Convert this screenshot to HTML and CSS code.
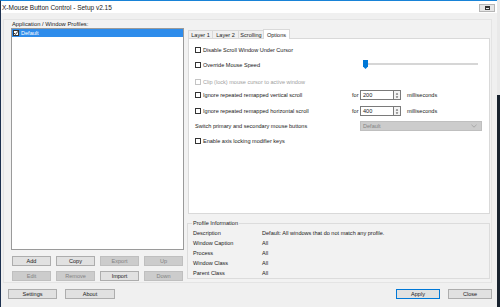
FILE: index.html
```html
<!DOCTYPE html>
<html>
	<head>
		<meta charset="utf-8">
		<title>X-Mouse Button Control - Setup v2.15</title>
		<link rel="stylesheet" href="styles.css">
	</head>
	<body>
		<div class="window">
			<div class="titlebar">
				<span class="title">X-Mouse Button Control - Setup v2.15</span>
				<span class="restore"><i></i></span>
			</div>
			<div class="client">
				<div class="panel">
					<!-- left: profiles -->
					<div class="profiles">
						<div class="caption">Application / Window Profiles:</div>
						<div class="listbox">
							<div class="item selected">
								<span class="check on">
									<svg width="6" height="6" viewBox="0 0 6 6"><path d="M1 3 L2.4 4.5 L5 1.2" fill="none" stroke="#222" stroke-width="0.9"/></svg>
								</span>
								<span>Default</span>
							</div>
						</div>
						<div class="btngrid">
							<span class="btn">Add</span>
							<span class="btn">Copy</span>
							<span class="btn off">Export</span>
							<span class="btn off">Up</span>
							<span class="btn off">Edit</span>
							<span class="btn off">Remove</span>
							<span class="btn">Import</span>
							<span class="btn off">Down</span>
						</div>
					</div>
					<!-- right: tabs + profile info -->
					<div class="settings">
						<div class="tabs">
							<span class="tab t1">Layer 1</span>
							<span class="tab t2">Layer 2</span>
							<span class="tab t3">Scrolling</span>
							<span class="tab t4 active">Options</span>
						</div>
						<div class="tabpage">
							<div class="row r1">
								<label class="cb"><span class="check"></span>Disable Scroll Window Under Cursor</label>
							</div>
							<div class="row r2">
								<label class="cb wslider"><span class="check"></span>Override Mouse Speed</label>
								<div class="slider">
									<div class="track"></div>
									<svg class="thumb" width="5" height="9" viewBox="0 0 5 9"><path d="M0 0 H5 V6.5 L2.5 9 L0 6.5 Z" fill="#0078d7"/></svg>
								</div>
							</div>
							<div class="row r3">
								<label class="cb disabled"><span class="check"></span>Clip (lock) mouse cursor to active window</label>
							</div>
							<div class="row r4">
								<label class="cb wfor"><span class="check"></span>Ignore repeated remapped vertical scroll</label>
								<span class="for">for</span>
								<span class="num">200</span>
								<span class="spin">
									<svg width="7" height="9" viewBox="0 0 7 9"><path d="M2 3.2 L3.5 1.7 L5 3.2 Z M2 5.8 L3.5 7.3 L5 5.8 Z" fill="#444"/></svg>
								</span>
								<span class="ms">milliseconds</span>
							</div>
							<div class="row r5">
								<label class="cb wfor"><span class="check"></span>Ignore repeated remapped horizontal scroll</label>
								<span class="for">for</span>
								<span class="num">400</span>
								<span class="spin">
									<svg width="7" height="9" viewBox="0 0 7 9"><path d="M2 3.2 L3.5 1.7 L5 3.2 Z M2 5.8 L3.5 7.3 L5 5.8 Z" fill="#444"/></svg>
								</span>
								<span class="ms">milliseconds</span>
							</div>
							<div class="row r6">
								<span class="plain">Switch primary and secondary mouse buttons</span>
								<span class="combo">
									<span>Default</span>
									<svg width="6" height="4" viewBox="0 0 6 4"><path d="M0.5 0.8 L3 3.2 L5.5 0.8" fill="none" stroke="#9a9a9a" stroke-width="0.7"/></svg>
								</span>
							</div>
							<div class="row r7">
								<label class="cb"><span class="check"></span>Enable axis locking modifier keys</label>
							</div>
						</div>
						<fieldset class="info">
							<legend>Profile Information</legend>
							<div class="inforow"><span class="key">Description</span><span>Default: All windows that do not match any profile.</span></div>
							<div class="inforow"><span class="key">Window Caption</span><span>All</span></div>
							<div class="inforow"><span class="key">Process</span><span>All</span></div>
							<div class="inforow"><span class="key">Window Class</span><span>All</span></div>
							<div class="inforow"><span class="key">Parent Class</span><span>All</span></div>
						</fieldset>
					</div>
				</div>
				<div class="footer">
					<span class="btn wide">Settings</span>
					<span class="btn wide about">About</span>
					<span class="spacer"></span>
					<span class="btn apply">Apply</span>
					<span class="btn close">Close</span>
				</div>
			</div>
		</div>
	</body>
</html>
```

FILE: styles.css
```css
*{
	margin: 0;
	padding: 0;
	box-sizing: border-box;
}
body{
	width: 500px;
	height: 307px;
	overflow: hidden;
	background: linear-gradient(#e9e9e9 0, #e9e9e9 95px, #18222e 95px);
	font: 5.55px "Liberation Sans", Arial, sans-serif;
	color: #1a1a1a;
}
.window{
	width: 497px;
	height: 307px;
	background: #f0f0f0;
	border-left: 1px solid #1d3150;
	border-top: 1px solid #1883d7;
	display: flex;
	flex-direction: column;
}
.titlebar{
	height: 12px;
	background: #fff;
	display: flex;
	align-items: center;
	justify-content: space-between;
	padding: 0 2px 0 1px;
}
.title{
	font-size: 6.5px;
}
.restore{
	width: 16px;
	height: 8px;
	margin-top: 1px;
	background: #e6e6e6;
	border: 1px solid #b5b5b5;
	display: flex;
	align-items: center;
	justify-content: center;
}
.restore i{
	width: 5px;
	height: 4px;
	border: 1px solid #333;
	border-top-width: 2px;
}
.client{
	flex: 1;
	display: flex;
	flex-direction: column;
}
.panel{
	margin: 6px 5px 0 2px;
	height: 264px;
	border: 1px solid #e4e4e4;
	background: #f2f2f2;
	display: flex;
}

/* profiles */
.profiles{
	width: 182px;
	padding: 0 0 0 7px;
}
.caption{
	height: 8px;
	line-height: 8px;
	padding-left: 1px;
	font-size: 5.8px;
}
.listbox{
	width: 173px;
	height: 222px;
	background: #fff;
	border: 1px solid #9a9a9a;
}
.item{
	height: 8px;
	display: flex;
	align-items: center;
	gap: 2px;
	padding-left: 1px;
}
.item.selected{
	background: #2e8ceb;
	color: #fff;
}
.check{
	width: 6px;
	height: 6px;
	background: #fff;
	border: 1px solid #333;
	flex: none;
	display: inline-flex;
}
.check svg{
	margin: -1px;
}
.btngrid{
	margin-top: 6px;
	display: grid;
	grid-template-columns: repeat(4, 39px);
	grid-auto-rows: 10px;
	column-gap: 5px;
	row-gap: 5px;
	padding-left: 1px;
}
.btn{
	height: 10px;
	display: flex;
	align-items: center;
	justify-content: center;
	background: #e1e1e1;
	border: 1px solid #adadad;
}
.btn.off{
	background: #cccccc;
	border-color: #bfbfbf;
	color: #838383;
}

/* settings side */
.settings{
	flex: 1;
	padding: 9px 1px 0 1px;
	display: flex;
	flex-direction: column;
}
.tabs{
	height: 9px;
	display: flex;
	align-items: flex-end;
	padding-left: 1px;
	position: relative;
	z-index: 1;
}
.tab{
	height: 8px;
	display: flex;
	align-items: center;
	justify-content: center;
	border: 1px solid #d9d9d9;
	border-bottom: 0;
	background: #f0f0f0;
	margin-right: -1px;
}
.t1{ width: 25px; }
.t2{ width: 27px; }
.t3{ width: 26px; }
.t4{ width: 27px; }
.tab.active{
	height: 10px;
	background: #fff;
	margin-bottom: -1px;
}
.tabpage{
	width: 302px;
	height: 176px;
	margin-left: 1px;
	background: #fff;
	border: 1px solid #d9d9d9;
	padding: 6px 0 0 6px;
}
.row{
	height: 10px;
	display: flex;
	align-items: center;
}
.r2{ margin-top: 5px; }
.r3{ margin-top: 7px; }
.r4{ margin-top: 3px; }
.r5{ margin-top: 6px; }
.r6{ margin-top: 5px; }
.r7{ margin-top: 5px; }
.cb{
	display: flex;
	align-items: center;
	gap: 2px;
}
.cb.disabled{
	color: #a0a0a0;
}
.cb.disabled .check{
	border-color: #c4c4c4;
}
.wfor{ width: 157px; }
.wslider{ width: 168px; }
.plain{ width: 165px; }
.for{ width: 8px; }
.num{
	width: 33px;
	height: 10px;
	border: 1px solid #7a7a7a;
	border-right: 0;
	background: #fff;
	display: flex;
	align-items: center;
	padding-left: 2px;
}
.spin{
	width: 8px;
	height: 10px;
	border: 1px solid #7a7a7a;
	background: #f4f4f4;
	display: flex;
	align-items: center;
	justify-content: center;
}
.ms{ margin-left: 6px; }
.slider{
	width: 115px;
	height: 10px;
	position: relative;
}
.track{
	margin: 3px 0 0 3px;
	height: 2px;
	background: #e7eaea;
	border: 1px solid #d6d6d6;
}
.thumb{
	position: absolute;
	left: 0;
	top: 0;
}
.combo{
	width: 122px;
	height: 10px;
	background: #cccccc;
	border: 1px solid #bfbfbf;
	color: #838383;
	display: flex;
	align-items: center;
	justify-content: space-between;
	padding: 0 4px 0 2px;
}

/* profile information */
.info{
	margin-top: 6px;
	width: 303px;
	height: 59px;
	border: 1px solid #dcdcdc;
	padding: 2px 0 0 5px;
}
.info legend{
	padding: 0 1px;
	line-height: 6px;
	margin-left: -1px;
}
.inforow{
	height: 10px;
	display: flex;
	align-items: center;
}
.key{
	width: 69px;
}

/* footer */
.footer{
	display: flex;
	padding: 6px 5px 0 7px;
	gap: 8px;
}
.btn.wide{ width: 49px; }
.btn.about{ width: 50px; }
.spacer{ flex: 1; }
.apply,
.close{ width: 44px; }
.apply{
	border-color: #0078d7;
}
```
